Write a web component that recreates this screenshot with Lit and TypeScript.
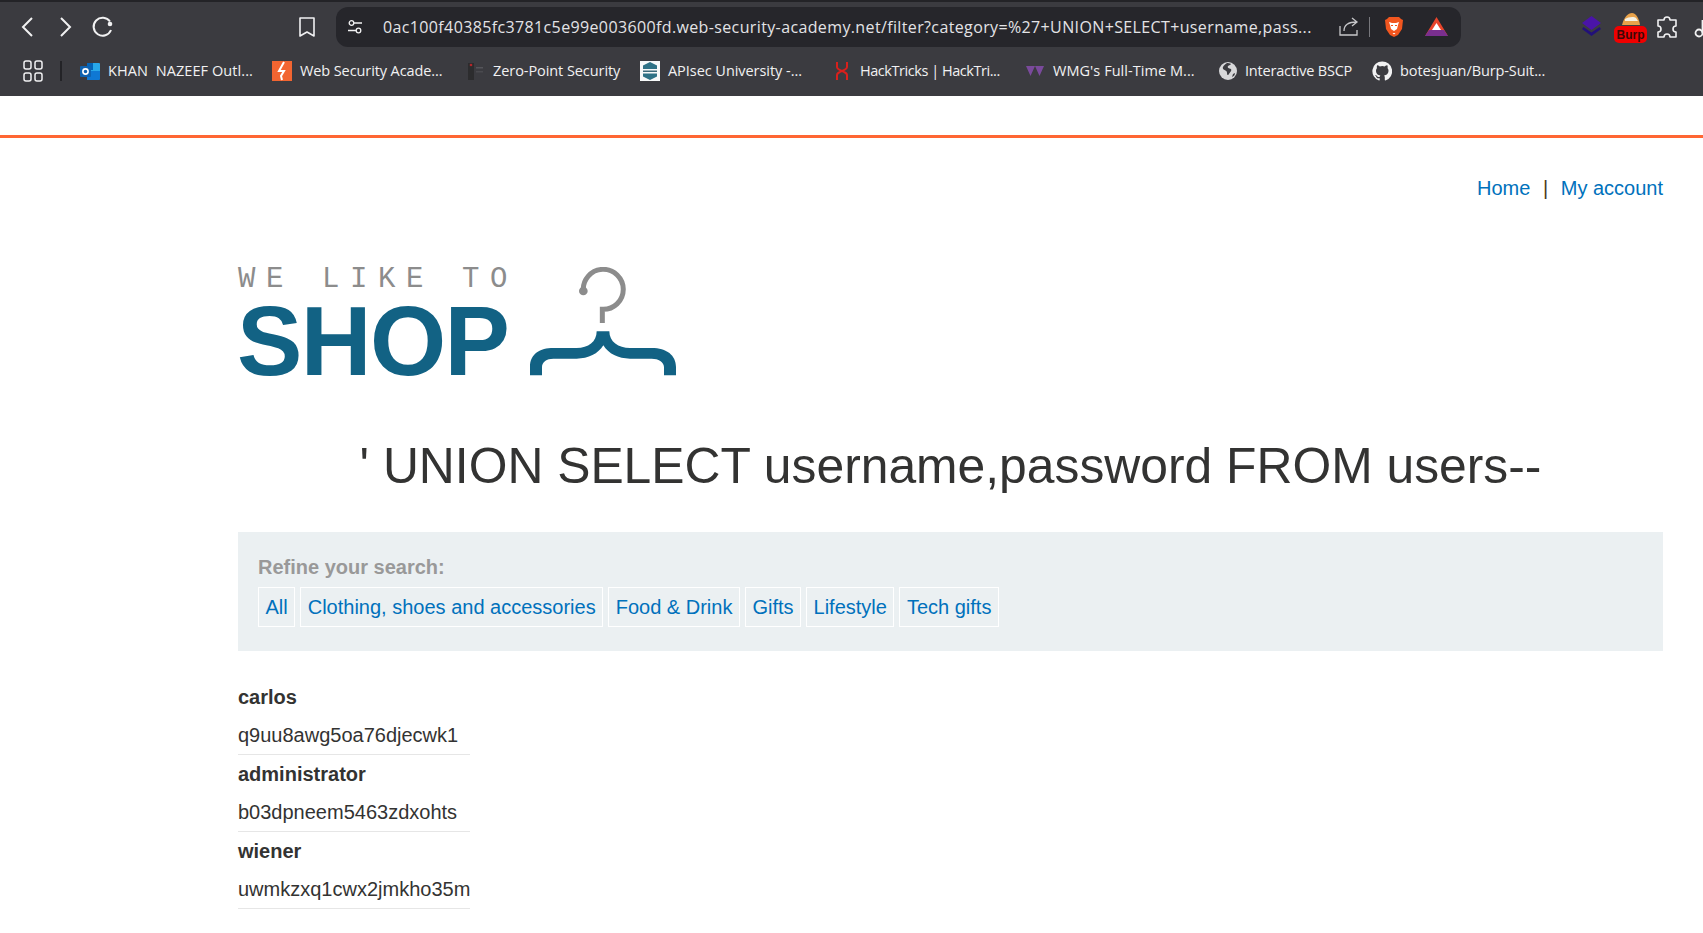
import { LitElement, html, css, svg } from 'lit';
import { customElement } from 'lit/decorators.js';

const icons: Record<string, unknown> = {
  outlook: svg`<rect x="7" y="2" width="13" height="14" rx="1" fill="#28a8ea"/><path d="M7 10l13 0v8a1 1 0 0 1-1 1H7z" fill="#0f78d4"/><path d="M7 2h6v7H7z" fill="#0364b8"/><rect x="0" y="5" width="11" height="11" rx="1" fill="#0f62b0"/><circle cx="5.500" cy="10.500" r="2.600" fill="none" stroke="#fff" stroke-width="1.600"/>`,
  academy: svg`<rect width="20" height="20" fill="#f26531"/><path d="M12 1 7 10h5l-3 5 1 4" fill="none" stroke="#fff" stroke-width="2"/>`,
  zero: svg`<rect x="3" y="2" width="6" height="17" fill="#2c2c2e"/><circle cx="6" cy="4" r="1.300" fill="#b3262a"/><rect x="11" y="6" width="7" height="1.500" fill="#55555a"/><rect x="11" y="10" width="7" height="1.500" fill="#4a4a4f"/>`,
  apisec: svg`<rect width="20" height="20" fill="#f7f9f9"/><path d="M10 1l7 3.500v11L10 19l-7-3.500v-11z" fill="#2f7286"/><rect x="1" y="8" width="18" height="4.500" fill="#f7f9f9"/><rect x="3" y="9.500" width="14" height="1.500" fill="#3c6a7a"/>`,
  hack: svg`<path d="M4 1v5c0 4 10 4 10 8v5M14 1v5c0 4-10 4-10 8v5" fill="none" stroke="#d9201c" stroke-width="2"/>`,
  wmg: svg`<path d="M1 5h9l-4.500 10zM10 5h9l-4.500 10z" fill="#7a4a9c"/>`,
  globe: svg`<circle cx="10" cy="10" r="9" fill="#d7d7d9"/><path d="M9 2C6 4 4 6 5 8c2 2 4 1 4 4 0 2 1 3 2 1s3-3 2-5c-2-1-4-1-3-3 1-1 3-1 3-2-1-1-3-1-4-1zM15 13l2-1c0 2-1 3-3 4z" fill="#3b3b40"/>`,
  github: svg`<path d="M10 .5a9.700 9.700 0 0 0-3 18.900c.5.100.7-.2.700-.5v-1.700c-2.700.6-3.300-1.300-3.300-1.300-.4-1.100-1.100-1.400-1.100-1.400-.9-.6.100-.6.100-.6 1 .1 1.500 1 1.500 1 .9 1.500 2.300 1.100 2.900.8.100-.6.300-1.100.6-1.300-2.200-.2-4.400-1.100-4.400-4.800 0-1.100.4-1.900 1-2.600-.1-.2-.4-1.200.1-2.600 0 0 .8-.3 2.700 1a9 9 0 0 1 4.900 0c1.800-1.300 2.700-1 2.700-1 .5 1.400.2 2.400.1 2.600.6.700 1 1.500 1 2.600 0 3.700-2.300 4.600-4.400 4.800.3.300.7.900.7 1.800v2.700c0 .3.200.6.700.5A9.700 9.700 0 0 0 10 .5z" fill="#f1f1f2"/>`,
};

// track: letter spacing per label, Open Sans runs a bit different from the original font
const bookmarks = [
  { icon: 'outlook', label: 'KHAN\u00a0 NAZEEF Outl...', x: 80, textX: 108, track: 0.08 },
  { icon: 'academy', label: 'Web Security Acade...', x: 272, textX: 300, track: -0.1 },
  { icon: 'zero', label: 'Zero-Point Security', x: 465, textX: 493, track: -0.07 },
  { icon: 'apisec', label: 'APIsec University -...', x: 640, textX: 668, track: -0.05 },
  { icon: 'hack', label: 'HackTricks | HackTri...', x: 833, textX: 860, track: -0.45 },
  { icon: 'wmg', label: "WMG's Full-Time M...", x: 1025, textX: 1053, track: 0.05 },
  { icon: 'globe', label: 'Interactive BSCP', x: 1218, textX: 1245, track: -0.2 },
  { icon: 'github', label: 'botesjuan/Burp-Suit...', x: 1372, textX: 1400, track: -0.1 },
];

const filters = ['All', 'Clothing, shoes and accessories', 'Food & Drink', 'Gifts', 'Lifestyle', 'Tech gifts'];

const credentials = [
  ['carlos', 'q9uu8awg5oa76djecwk1'],
  ['administrator', 'b03dpneem5463zdxohts'],
  ['wiener', 'uwmkzxq1cwx2jmkho35m'],
];

@customElement('app-root')
export class AppRoot extends LitElement {
  static styles = css`
    :host {
      display: block;
      height: 933px;
      overflow: hidden;
      background: #fff;
      font-family: 'Liberation Sans', Arial, sans-serif;
      color: #333332;
    }

    .chrome {
      height: 96px;
      background: #3b3b40;
      border-top: 2px solid #232327;
      box-sizing: border-box;
      font-family: 'Open Sans', 'Noto Sans', sans-serif;
      color: #f1f1f2;
      overflow: hidden;
    }

    .toolbar {
      height: 45px;
      display: flex;
      align-items: center;
      padding-top: 4px;
      box-sizing: border-box;
    }

    .toolbar svg { display: block; flex: none; }
    .back { margin-left: 20px; }
    .forward { margin-left: 21px; }
    .reload { margin-left: 17px; }
    .bookmark { margin-left: 184px; }

    .omnibox {
      margin-left: 20px;
      width: 1125px;
      height: 40px;
      border-radius: 12px;
      background: #26262b;
      display: flex;
      align-items: center;
      flex: none;
    }

    .tune { margin-left: 11px; }

    .url {
      margin-left: 20px;
      width: 929px;
      font-size: 16px;
      letter-spacing: 0.370px;
      color: #e3e3e6;
      white-space: nowrap;
      overflow: hidden;
    }

    .share { margin-left: 27px; }
    .vsep { width: 1px; height: 20px; background: #77777c; margin-left: 10px; }
    .brave { margin-left: 14px; }
    .bat { margin-left: 21px; }
    .ext1 { margin-left: 120px; }
    .ext2 { margin-left: 12px; position: relative; width: 33px; height: 40px; }
    .ext3 { margin-left: 9px; }
    .ext4 { margin-left: 16px; }

    .burp-tag {
      position: absolute;
      left: 0;
      top: 19px;
      width: 33px;
      height: 17px;
      background: #f00000;
      border-radius: 5px;
      color: #3a0808;
      font: bold 12px 'Liberation Sans', sans-serif;
      text-align: center;
      line-height: 18px;
    }

    .bar {
      height: 48px;
      position: relative;
    }

    .apps { position: absolute; left: 23px; top: 13px; }
    .bar-sep { position: absolute; left: 60px; top: 14px; width: 2px; height: 20px; background: #232327; }

    .mark {
      position: absolute;
      top: 0;
      height: 48px;
      display: flex;
      align-items: center;
      white-space: nowrap;
      font-size: 14.500px;
    }

    .mark svg { flex: none; display: block; }
    .mark span { margin-top: -2px; }

    .top-rule {
      height: 39px;
      border-bottom: 3px solid #ff6633;
    }

    .account {
      display: flex;
      justify-content: flex-end;
      align-items: center;
      gap: 12.600px;
      padding: 38px 40px 0 0;
      font-size: 20px;
      line-height: 24px;
    }

    a { color: #0071bc; text-decoration: none; }
    .pipe { color: #4a3a20; }

    .main {
      margin: 0 40px 0 238px;
    }

    .logo {
      margin-top: 63px;
      height: 112px;
      display: flex;
      align-items: flex-start;
    }

    .logo-words { width: 292px; margin-left: -1px; }

    .logo-top {
      font-family: 'Liberation Mono', monospace;
      font-size: 29px;
      line-height: 34px;
      height: 30px;
      color: #8c8c8c;
      letter-spacing: 10.600px;
      white-space: pre;
      padding-left: 1px;
    }

    .logo-shop {
      font-weight: 700;
      font-size: 98px;
      line-height: 82px;
      margin-top: 7px;
      color: #126284;
      letter-spacing: -1.600px;
    }

    .hanger { margin: 4px 0 0 1px; flex: none; }

    h1 {
      margin: 60px 0 0;
      text-align: center;
      font-weight: 400;
      font-size: 49.800px;
      line-height: 62px;
      color: #333332;
    }

    .panel {
      margin-top: 35px;
      background: #ebf0f2;
      height: 119px;
      box-sizing: border-box;
      padding: 23px 20px 0;
    }

    .refine {
      font-weight: 700;
      font-size: 20px;
      line-height: 24px;
      color: #999;
    }

    .filters {
      display: flex;
      gap: 5px;
      margin-top: 8px;
    }

    .filters a {
      border: 1px solid #fff;
      font-size: 20px;
      line-height: 24px;
      padding: 7px 6.500px;
    }

    .creds {
      margin-top: 27px;
      width: 232px;
    }

    .cred {
      height: 77px;
      box-sizing: border-box;
      border-bottom: 1px solid #e6e6e6;
      font-size: 20px;
      line-height: 24px;
      white-space: nowrap;
    }

    .cred b { display: block; padding-top: 7px; color: #333332; }
    .cred span { display: block; margin-top: 14px; }
  `;

  private icon(name: string) {
    return html`<svg width="20" height="20" viewBox="0 0 20 20">${icons[name]}</svg>`;
  }

  render() {
    return html`
      <div class="chrome">
        <div class="toolbar">
          <svg class="back" width="16" height="24" viewBox="0 0 16 24"><path d="M12 3 3 12l9 9" fill="none" stroke="#f1f1f2" stroke-width="2"/></svg>
          <svg class="forward" width="16" height="24" viewBox="0 0 16 24"><path d="M4 3l9 9-9 9" fill="none" stroke="#f1f1f2" stroke-width="2"/></svg>
          <svg class="reload" width="24" height="24" viewBox="0 0 24 24"><path d="M20 6.500A9 9 0 1 0 21 15" fill="none" stroke="#f1f1f2" stroke-width="2"/><circle cx="20" cy="9" r="2.300" fill="#f1f1f2"/></svg>
          <svg class="bookmark" width="18" height="24" viewBox="0 0 18 24"><path d="M2 3h14v18l-7-4-7 4z" fill="none" stroke="#f1f1f2" stroke-width="1.600" stroke-linejoin="round"/></svg>
          <div class="omnibox">
            <svg class="tune" width="16" height="16" viewBox="0 0 16 16"><path d="M7 4h8M1 11.500h8" stroke="#f1f1f2" stroke-width="1.300"/><circle cx="4.500" cy="4" r="2.300" fill="none" stroke="#f1f1f2" stroke-width="1.300"/><circle cx="11.500" cy="11.500" r="2.300" fill="none" stroke="#f1f1f2" stroke-width="1.300"/></svg>
            <div class="url">0ac100f40385fc3781c5e99e003600fd.web-security-academy.net/filter?category=%27+UNION+SELECT+username,pass...</div>
            <svg class="share" width="20" height="20" viewBox="0 0 20 20"><path d="M1 9v9h17v-5M5 14c0-6 4-9 13-9M13 1l5 4-5 4" fill="none" stroke="#c7c7ca" stroke-width="1.300"/></svg>
            <div class="vsep"></div>
            <svg class="brave" width="20" height="22" viewBox="0 0 20 22"><path d="M5 1h10l2 2 2 1-1 9-4 6-4 2-4-2-4-6-1-9 2-1z" fill="#f1561f"/><path d="M5 6l3 1h4l3-1-1 3-1 4-3 2-3-2-1-4zM8.500 17h3L10 18.500z" fill="#fff"/><path d="M7 9h2v1H7zM11 9h2v1h-2z" fill="#f1561f"/></svg>
            <svg class="bat" width="23" height="21" viewBox="0 0 23 21"><path d="M11.500 1 23 20 11.500 14 0 20z" fill="#e8442a"/><path d="M0 20h23l-4-6H4z" fill="#7a2f8f"/><path d="M11.500 7 16 14H7z" fill="#fff"/></svg>
          </div>
          <svg class="ext1" width="21" height="21" viewBox="0 0 21 21"><path d="M10.500 0 20 7l-9.500 7L1 7z" fill="#4a14a8"/><path d="M2.500 11 10.500 16.500 18.500 11 20 13l-9.500 7L1 13z" fill="#22107a"/></svg>
          <div class="ext2">
            <svg width="33" height="24" viewBox="0 0 33 24"><path d="M8 18c2-8 6-12 10-12s7 5 8 12z" fill="#e8a24a"/><path d="M11 12c3-2 9-3 11-1l2 3H11z" fill="#f6f1e4"/></svg>
            <div class="burp-tag">Burp</div>
          </div>
          <svg class="ext3" width="22" height="22" viewBox="0 0 22 22"><path d="M8 4c0-4 6-4 6 0h6v6c-4 0-4 6 0 6v5h-6c0-4-6-4-6 0H2v-5c4 0 4-6 0-6V4z" fill="none" stroke="#f1f1f2" stroke-width="1.600" stroke-linejoin="round"/></svg>
          <svg class="ext4" width="20" height="22" viewBox="0 0 20 22"><circle cx="5" cy="17" r="3.500" fill="none" stroke="#f1f1f2" stroke-width="1.800"/><path d="M8.500 17V4" stroke="#f1f1f2" stroke-width="1.800"/></svg>
        </div>
        <div class="bar">
          <svg class="apps" width="20" height="22" viewBox="0 0 20 22"><g fill="none" stroke="#f1f1f2" stroke-width="1.500"><rect x="1" y="1" width="7" height="8" rx="2"/><rect x="12" y="1" width="7" height="8" rx="2"/><rect x="1" y="13" width="7" height="8" rx="2"/><rect x="12" y="13" width="7" height="8" rx="2"/></g></svg>
          <div class="bar-sep"></div>
          ${bookmarks.map(b => html`
            <div class="mark" style="left:${b.x}px">
              ${this.icon(b.icon)}
              <span style="margin-left:${b.textX - b.x - 20}px;letter-spacing:${b.track}px">${b.label}</span>
            </div>
          `)}
        </div>
      </div>
      <div class="top-rule"></div>
      <div class="account">
        <a href="#">Home</a><span class="pipe">|</span><a href="#">My account</a>
      </div>
      <div class="main">
        <div class="logo">
          <div class="logo-words">
            <div class="logo-top">WE LIKE TO</div>
            <div class="logo-shop">SHOP</div>
          </div>
          <svg class="hanger" width="146" height="109" viewBox="930 50 438 327">
            <path d="M1090 122A60 60 0 1 1 1147 177V218" fill="none" stroke="#8c8c8c" stroke-width="15"/>
            <circle cx="1090" cy="122" r="13" fill="#8c8c8c"/>
            <path d="M930 375V350C930 310 960 293 1000 293H1070C1105 293 1130 275 1130 243H1168C1168 275 1195 293 1230 293H1295C1340 293 1368 315 1368 350V375H1332V350C1332 335 1315 325 1295 325H1230C1195 325 1165 310 1150 285C1135 310 1105 325 1070 325H1000C980 325 966 335 966 350V375Z" fill="#126284"/>
          </svg>
        </div>
        <h1>' UNION SELECT username,password FROM users--</h1>
        <div class="panel">
          <div class="refine">Refine your search:</div>
          <div class="filters">
            ${filters.map(f => html`<a href="#">${f}</a>`)}
          </div>
        </div>
        <div class="creds">
          ${credentials.map(([user, pass]) => html`
            <div class="cred"><b>${user}</b><span>${pass}</span></div>
          `)}
        </div>
      </div>
    `;
  }
}
